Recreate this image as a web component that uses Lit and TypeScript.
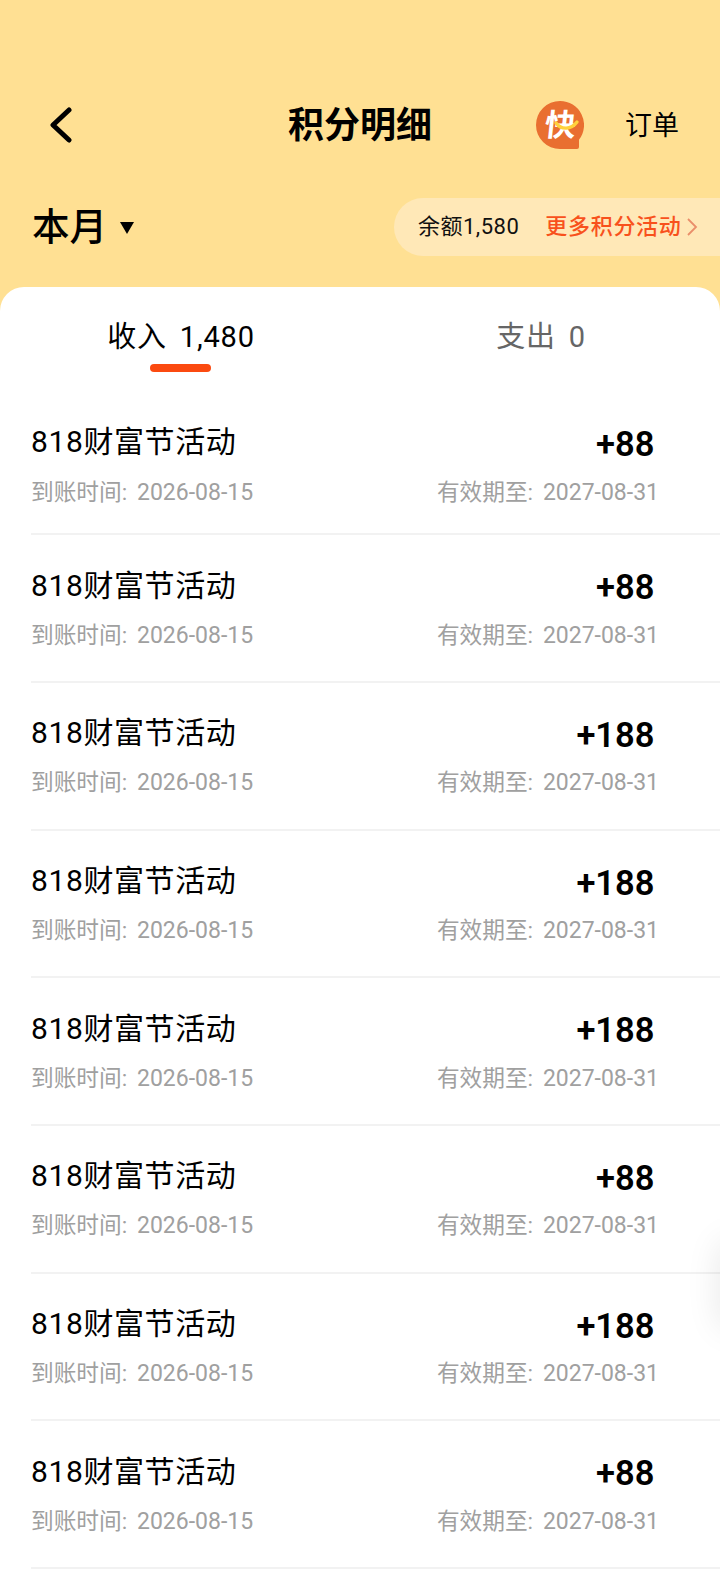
import { LitElement, html, css, svg } from "lit";
import { customElement } from "lit/decorators.js";

const ROWS = [88, 88, 188, 188, 188, 88, 188, 88];

@customElement("app-root")
export class AppRoot extends LitElement {
  static styles = css`
    :host { display: block; position: relative; width: 720px; height: 1584px; overflow: hidden; background: #ffe093;
      font-family: Roboto, "Noto Sans CJK SC", sans-serif; color: #000; }
    .head { height: 287px; box-sizing: border-box; padding-top: 96px; display: flex; flex-direction: column; }
    .nav { height: 56px; display: grid; grid-template-columns: 1fr auto 1fr; align-items: center; padding: 0 41px; }
    .back { display: block; margin-left: 7px; }
    .title { font-size: 36px; font-weight: 700; line-height: 56px; padding-top: 2px; }
    .nav-right { display: flex; align-items: center; justify-content: flex-end; gap: 41px; }
    .logo { display: block; }
    .logo-char { font-size: 31px; font-weight: 700; fill: #fff; font-family: "Noto Sans CJK SC", sans-serif; }
    .order { font-size: 27px; line-height: 36px; padding-top: 1px; }
    .filter { display: flex; align-items: center; justify-content: space-between; margin-top: 46px; padding-left: 32px; }
    .month { display: flex; align-items: center; gap: 13px; font-size: 37.5px; font-weight: 500; line-height: 58px; }
    .tri { margin-top: 2px; }
    .pill { display: flex; align-items: center; width: 326px; height: 58px; box-sizing: border-box; padding-left: 24px;
      border-radius: 29px 0 0 29px; background: #ffe8b7; }
    .bal { font-size: 22px; line-height: 30px; color: #111; letter-spacing: .5px; }
    .more { font-size: 22px; font-weight: 500; line-height: 30px; color: #f8511c; margin-left: 26px; letter-spacing: .7px; }
    .chev { margin-left: 4px; }
    .card { background: #fff; border-radius: 24px 24px 0 0; position: relative; height: 1297px; }
    .tabs { display: grid; grid-template-columns: 1fr 1fr; height: 103px; }
    .tab { display: flex; flex-direction: column; align-items: center; padding: 30px 0 0 2px; font-size: 29px; line-height: 40px; color: #666; letter-spacing: .8px; word-spacing: -1.5px; position: relative; }
    .tab span { white-space: pre; }
    .tab.on { color: #000; }
    .bar { position: absolute; top: 77px; width: 61px; height: 8px; border-radius: 4px; background: #fb4a10; margin-left: -2px; }
    .row { margin-left: 31px; height: 147.7px; box-sizing: border-box; border-bottom: 2px solid #f2f2f2; padding: 28.5px 61px 0 0; display: grid;
      grid-template-columns: 1fr auto; grid-template-rows: 44px 34px; row-gap: 11px; align-content: start; }
    .row.first { height: 145.2px; padding-top: 30px; row-gap: 12px; }
    .name { font-size: 30px; line-height: 44px; letter-spacing: .6px; }
    .amt { font-size: 34.5px; font-weight: 600; line-height: 44px; justify-self: end; padding-right: 4.5px; margin-top: 1.5px; }
    .sub { font-size: 22.7px; line-height: 34px; color: #a0a0a0; white-space: pre; }
    .date { font-size: 23px; margin-left: -1.5px; }
    .edge { position: absolute; right: -30px; top: 1240px; width: 30px; height: 90px; border-radius: 20px; box-shadow: 0 0 34px rgba(0,0,0,.10); }
  `;

  logo() {
    return svg`<svg class="logo" width="48" height="48" viewBox="0 0 48 48" aria-hidden="true">
      <path d="M24 0A24 24 0 1 0 24 48H41Q43 48 43 46V38.700A24 24 0 0 0 24 0z" fill="#e96f30"/>
      <text class="logo-char" x="24" y="35" text-anchor="middle" transform="skewX(-6) translate(3 0)">快</text>
      <path d="M20 22c5 7 15 7 21 -1" fill="none" stroke="#ffd23c" stroke-width="3.400" stroke-linecap="round"/>
    </svg>`;
  }

  render() {
    return html`
      <div class="head">
        <div class="nav">
          <svg class="back" width="26" height="36" viewBox="0 0 26 36" aria-hidden="true"><path d="M21 3 5 18l16 15" fill="none" stroke="#000" stroke-width="5" stroke-linecap="round" stroke-linejoin="round"/></svg>
          <div class="title">积分明细</div>
          <div class="nav-right">${this.logo()}<span class="order">订单</span></div>
        </div>
        <div class="filter">
          <div class="month"><span>本月</span>
            <svg class="tri" width="14" height="12" viewBox="0 0 14 12" aria-hidden="true"><path d="M0 0h14L7 12z" fill="#000"/></svg>
          </div>
          <div class="pill">
            <span class="bal">余额1,580</span><span class="more">更多积分活动</span>
            <svg class="chev" width="12" height="20" viewBox="0 0 12 20" aria-hidden="true"><path d="M2 2l8 8-8 8" fill="none" stroke="#ea8e6a" stroke-width="1.800"/></svg>
          </div>
        </div>
      </div>
      <div class="card">
        <div class="tabs">
          <div class="tab on"><span>收入  1,480</span><i class="bar"></i></div>
          <div class="tab"><span>支出  0</span></div>
        </div>
        ${ROWS.map((n, i) => html`
          <div class="row ${i === 0 ? "first" : ""}">
            <div class="name">818财富节活动</div>
            <div class="amt">+${n}</div>
            <div class="sub">到账时间:  <span class="date">2026-08-15</span></div>
            <div class="sub">有效期至:  <span class="date">2027-08-31</span></div>
          </div>`)}
      </div>
      <div class="edge"></div>
    `;
  }
}
